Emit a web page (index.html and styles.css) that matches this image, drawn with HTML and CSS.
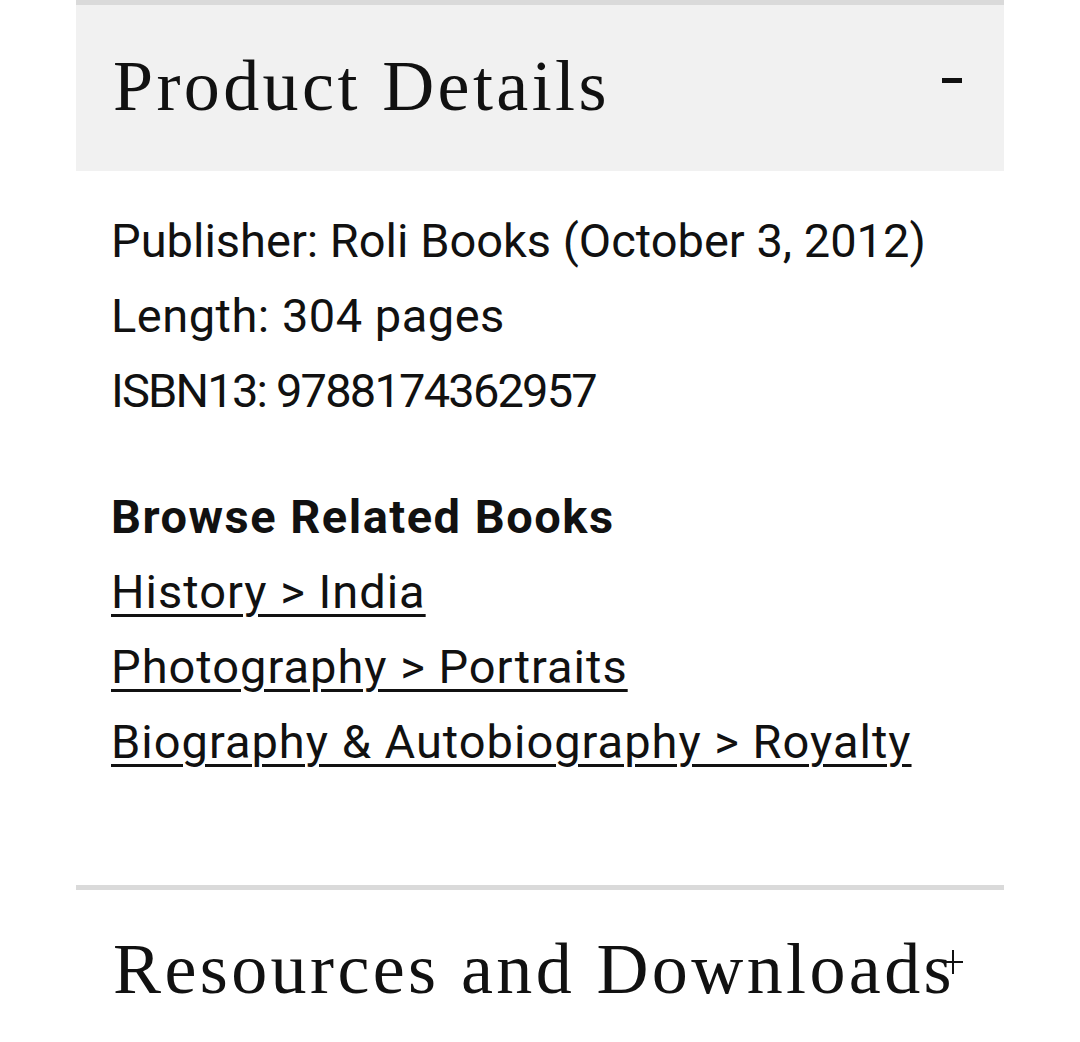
FILE: index.html
```html
<!DOCTYPE html>
<html lang="en">
<head>
<meta charset="utf-8">
<title>Product Details</title>
<link rel="stylesheet" href="styles.css">
</head>
<body>
<div class="accordion">
  <section class="panel panel-open">
    <div class="panel-head">
      <h2 class="panel-title">Product Details</h2>
      <span class="toggle toggle-minus" aria-label="Collapse"></span>
    </div>
    <div class="panel-body">
      <ul class="meta">
        <li class="meta-publisher">Publisher: Roli Books (October 3, 2012)</li>
        <li class="meta-length">Length: 304 pages</li>
        <li class="meta-isbn">ISBN13: 9788174362957</li>
      </ul>
      <p class="browse-title">Browse Related Books</p>
      <ul class="links">
        <li><a href="#">History &gt; India</a></li>
        <li><a href="#">Photography &gt; Portraits</a></li>
        <li><a href="#">Biography &amp; Autobiography &gt; Royalty</a></li>
      </ul>
    </div>
  </section>
  <section class="panel panel-closed">
    <div class="panel-head">
      <h2 class="panel-title">Resources and Downloads</h2>
      <span class="toggle toggle-plus" aria-label="Expand"></span>
    </div>
  </section>
</div>
</body>
</html>
```

FILE: styles.css
```css
html, body {
  margin: 0;
  padding: 0;
  background: #ffffff;
}

body {
  color: #111111;
  font-family: Roboto, "Liberation Sans", sans-serif;
}

.accordion {
  margin-left: 76px;
  width: 928px;
}

.panel {
  border-top: 5px solid #dadada;
}

.panel-head {
  position: relative;
  padding: 41px 42px 45px 37px;
}

.panel-open .panel-head {
  background: #f1f1f1;
}

.panel-closed .panel-head {
  padding-top: 39px;
}

.panel-title {
  margin: 0;
  font-family: "Liberation Serif", "Times New Roman", serif;
  font-weight: 400;
  font-size: 72px;
  line-height: 80px;
  letter-spacing: 3.4px;
  color: #111111;
  white-space: nowrap;
}

.toggle {
  position: absolute;
  display: block;
}

.toggle-minus {
  right: 42px;
  top: 73px;
  width: 20px;
  height: 5px;
  background: #111111;
}

.toggle-plus {
  right: 41px;
  top: 60px;
  width: 20px;
  height: 24px;
}

.toggle-plus::before,
.toggle-plus::after {
  content: "";
  position: absolute;
  background: #111111;
}

.toggle-plus::before {
  left: 0;
  top: 11px;
  width: 20px;
  height: 2px;
}

.toggle-plus::after {
  left: 9px;
  top: 0;
  width: 2px;
  height: 24px;
}

.panel-body {
  padding: 32px 36px 106px 35px;
  font-size: 47px;
  line-height: 75px;
}

.meta {
  list-style: none;
  margin: 0;
  padding: 0;
}

.meta-length {
  letter-spacing: 0.5px;
}

.meta-isbn {
  letter-spacing: -1.8px;
}

.browse-title {
  margin: 51px 0 0 0;
  font-weight: 700;
  letter-spacing: 1.5px;
}

.links {
  list-style: none;
  margin: 0;
  padding: 0;
}

.links a {
  color: #111111;
  letter-spacing: 1px;
  text-decoration: underline;
  text-decoration-thickness: 3px;
  text-underline-offset: 6px;
}
```
